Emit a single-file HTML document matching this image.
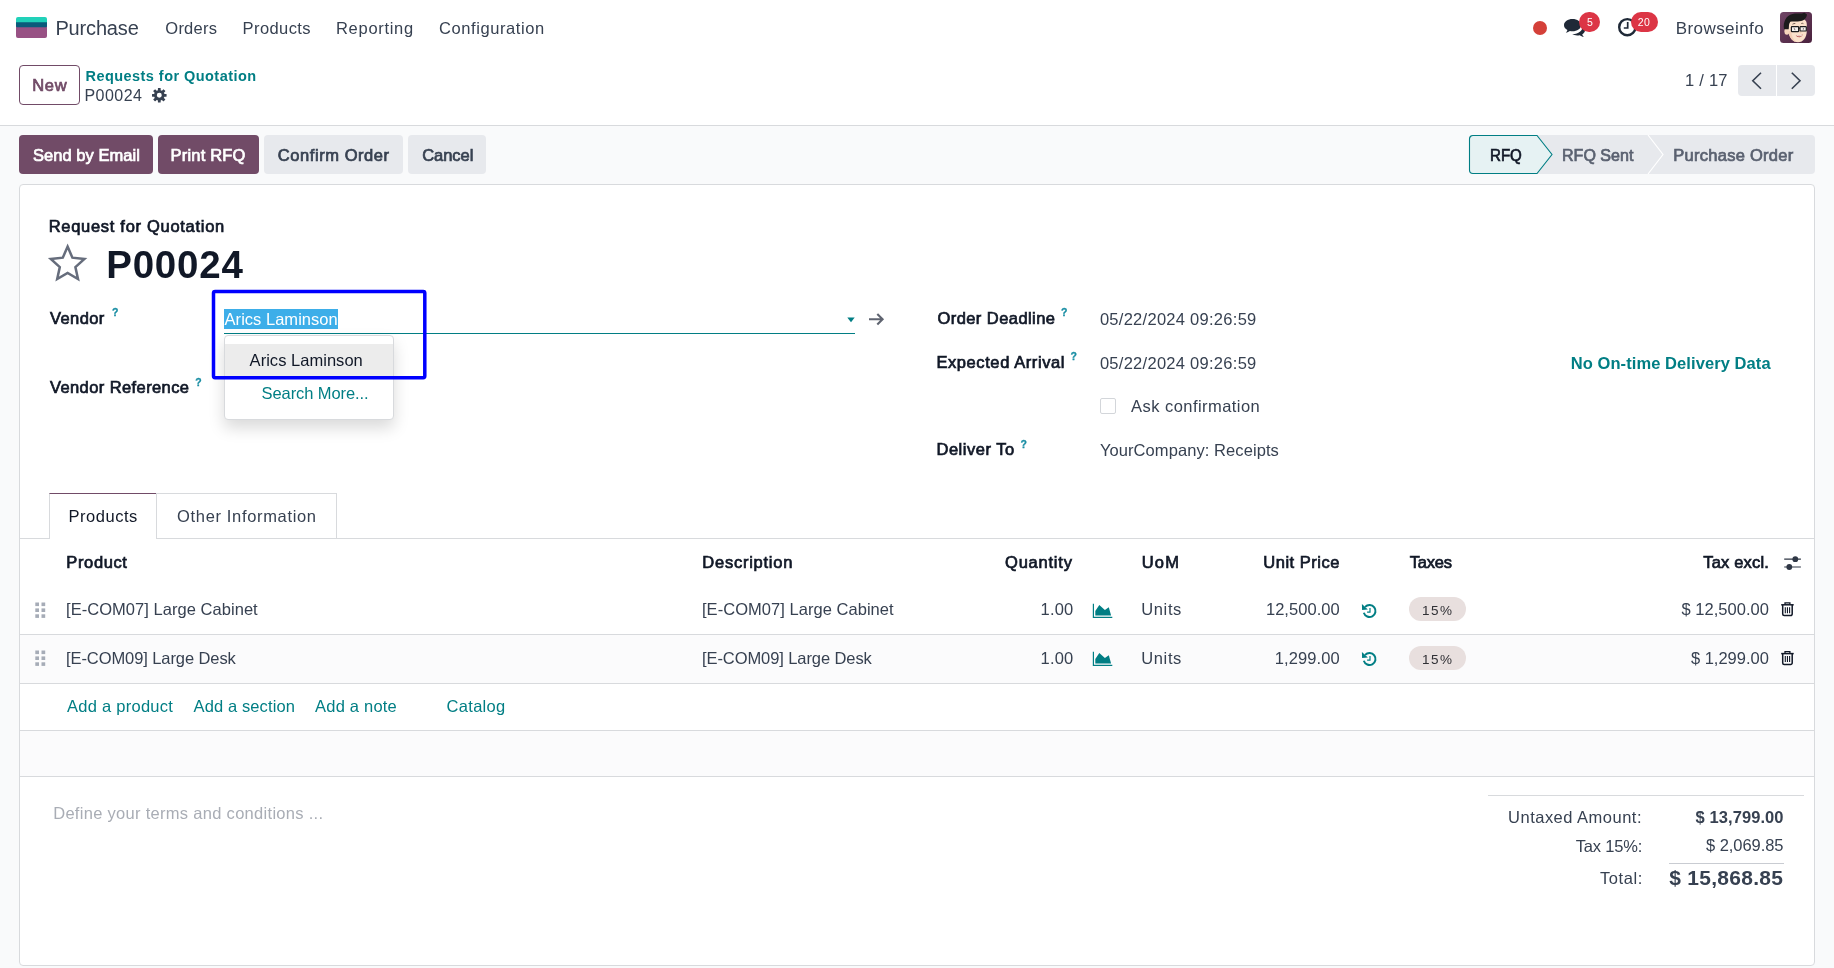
<!DOCTYPE html>
<html lang="en"><head><meta charset="utf-8"><title>Odoo - P00024</title>
<style>
html,body{margin:0;padding:0}
body{width:1834px;height:968px;overflow:hidden;background:#f9fafb;font-family:"Liberation Sans",sans-serif;color:#374151}
#app{will-change:transform;position:relative;width:1834px;height:968px;overflow:hidden}
.t{position:absolute;line-height:1;white-space:nowrap;margin:0;padding:0}
.a{position:absolute;box-sizing:border-box}
svg{position:absolute;overflow:visible}

</style></head>
<body>
<div id="app">
<!-- top header (navbar + control panel) -->
<div class="a" style="left:0;top:0;width:1834px;height:126px;background:#fff;border-bottom:1px solid #d8dadd"></div>
<!-- app logo -->
<svg style="left:16px;top:17px" width="31" height="21" viewBox="0 0 31 21"><path d="M0 8h31v11a2 2 0 0 1-2 2H2a2 2 0 0 1-2-2z" fill="#985184"/><path d="M2 0h27a2 2 0 0 1 2 2v4H0V2a2 2 0 0 1 2-2z" fill="#21d1b9"/><path d="M0 5.200h31v3.800a1.200 1.200 0 0 1-1.200 1.200H1.200A1.200 1.200 0 0 1 0 9z" fill="#0b5a7a"/></svg>
<!-- systray -->
<div class="a" style="left:1532.6px;top:20.7px;width:14.6px;height:14.6px;border-radius:50%;background:#d44039"></div>
<svg style="left:1563px;top:18px" width="24" height="20" viewBox="0 0 24 20"><path d="M9.5 1.1c4.7 0 8.5 2.7 8.5 6.1s-3.800 6.100-8.500 6.100c-.9 0-1.800-.1-2.600-.3-1.100.8-2.500 1.500-4.100 1.700.7-.7 1.400-1.600 1.600-2.700C2.300 10.900 1 9.200 1 7.200 1 3.800 4.800 1.100 9.500 1.100z" fill="#1f2937"/><path d="M19.600 8.300c1.500 1 2.400 2.400 2.400 3.900 0 1.700-1.100 3.200-2.800 4.200.3 1 .9 1.800 1.600 2.500-1.600-.2-3-.9-4.100-1.700-.8.2-1.600.3-2.500.3-1.900 0-3.600-.5-5-1.400 5.700.3 10.700-3.100 10.400-7.800z" fill="#1f2937"/></svg>
<div class="a" style="left:1579px;top:12px;width:21px;height:20px;border-radius:10px;background:#dc3545"></div>
<svg style="left:1617px;top:17px" width="21" height="21" viewBox="0 0 21 21"><circle cx="10.300" cy="10.200" r="8.100" fill="none" stroke="#1f2937" stroke-width="2.400"/><path d="M10.700 5v6H6.800" fill="none" stroke="#1f2937" stroke-width="1.700"/></svg>
<div class="a" style="left:1630.600px;top:12px;width:27.500px;height:20px;border-radius:10px;background:#dc3545"></div>
<!-- avatar -->
<svg style="left:1780px;top:12px" width="32" height="31" viewBox="0 0 32 31"><defs><linearGradient id="avg" x1="0" y1="0" x2="1" y2="1"><stop offset="0" stop-color="#6f4465"/><stop offset="1" stop-color="#4a213d"/></linearGradient><clipPath id="avc"><rect width="32" height="31" rx="3.500"/></clipPath></defs><g clip-path="url(#avc)"><rect width="32" height="31" fill="url(#avg)"/>
<ellipse cx="6.900" cy="19.200" rx="2.500" ry="3.600" fill="#f7d6bd"/>
<path d="M8.600 10c0-3 3-4 9-4s9.200 2 9.200 6.500v6.500c0 6-3.500 11.300-8.800 11.300S8.600 25 8.600 19z" fill="#fbe1cb"/>
<path d="M8.600 19c.2 5 3 10 7.400 11-3-2.500-4.500-6.500-4.700-11z" fill="#f5cfb6"/>
<path d="M4 17.300C2.800 10 6 3.500 12.500 2c4.500-1 8.500.3 11.500-1.200.3-.2.700-.2.800.1.800.3 1.700 1 2.200 1.500-.3 2.600-1.800 5-4.200 6-4.500 1.800-9 .5-12.500 1.300-1.400 1.500-1.500 4.800-1.600 7.500z" fill="#1c1b1c"/>
<path d="M12.500 12.200c.9-.6 1.900-.8 2.800-.7M21.300 11.500c.7-.3 1.500-.3 2.100.1" fill="none" stroke="#3a2a26" stroke-width=".7"/>
<rect x="11.400" y="14.600" width="7.200" height="5" rx=".6" fill="#f4f1ee" stroke="#1d1d1f" stroke-width="1.200"/>
<rect x="20" y="14.700" width="6.300" height="4.300" rx=".6" fill="#f4f1ee" stroke="#1d1d1f" stroke-width="1.200"/>
<path d="M18.600 16.200h1.500" stroke="#1d1d1f" stroke-width="1.100"/>
<path d="M14.200 16.200l.8 2M22.800 16.300l1 .6-1 .6" fill="none" stroke="#4a3a36" stroke-width=".7"/>
<path d="M15.800 22.900c2.200.9 4.800.6 6.900-.7-.6 2.300-2 3.100-3.600 3-1.500-.1-2.700-.9-3.300-2.300z" fill="#b4524e"/>
<path d="M16.200 23c2 .7 4.300.5 6.100-.5-.3.800-.6 1.200-1 1.500-1.400.4-3 .3-4.400-.3z" fill="#f6f2ef"/>
<path d="M19.500 20.300c.5.500 1.200.6 1.800.3" fill="none" stroke="#e8b49c" stroke-width=".7"/>
</g></svg>
<!-- New button -->
<div class="a" style="left:19px;top:65px;width:61px;height:40px;border:1px solid #714B67;border-radius:4px;background:#fff"></div>
<!-- gear -->
<svg style="left:152px;top:87.800px" width="14.600" height="14.600" viewBox="-10 -10 20 20"><g fill="#374151"><path fill-rule="evenodd" d="M0-7.300a7.300 7.300 0 1 0 0 14.600 7.300 7.300 0 0 0 0-14.600zm0 3.900a3.400 3.400 0 1 1 0 6.800 3.400 3.400 0 0 1 0-6.800z"/><g id="gt"><rect x="-1.900" y="-10" width="3.800" height="4" rx=".5"/><rect x="-1.900" y="6" width="3.800" height="4" rx=".5"/></g><use href="#gt" transform="rotate(45)"/><use href="#gt" transform="rotate(90)"/><use href="#gt" transform="rotate(135)"/></g></svg>
<!-- pager -->
<div class="a" style="left:1738px;top:65px;width:38px;height:31px;border-radius:4px 0 0 4px;background:#e7e9ed"></div>
<div class="a" style="left:1777px;top:65px;width:38px;height:31px;border-radius:0 4px 4px 0;background:#e7e9ed"></div>
<svg style="left:1738px;top:65px" width="77" height="31" viewBox="0 0 77 31"><path d="M23 7.700l-8.200 8 8.200 8" fill="none" stroke="#374151" stroke-width="1.600"/><path d="M53.800 7.700l8.200 8-8.200 8" fill="none" stroke="#374151" stroke-width="1.600"/></svg>
<!-- action buttons -->
<div class="a" style="left:19px;top:135px;width:134px;height:39px;border-radius:4px;background:#714B67"></div>
<div class="a" style="left:158px;top:135px;width:101px;height:39px;border-radius:4px;background:#714B67"></div>
<div class="a" style="left:264px;top:135px;width:139px;height:39px;border-radius:4px;background:#e7e9ed"></div>
<div class="a" style="left:408px;top:135px;width:78px;height:39px;border-radius:4px;background:#e7e9ed"></div>
<!-- statusbar -->
<div class="a" style="left:1469px;top:135px;width:346px;height:39px;border-radius:4px;background:#e7e9ed"></div>
<svg style="left:1469px;top:135px" width="346" height="39" viewBox="0 0 346 39"><path d="M4 .5h64l15 19-15 19H4a3.500 3.500 0 0 1-3.500-3.500V4A3.500 3.500 0 0 1 4 .5z" fill="#e6f2f3" stroke="#017e84" stroke-width="1.100"/><path d="M179 0l15 19.500-15 19.500" fill="none" stroke="#fff" stroke-width="1.200"/></svg>
<!-- sheet -->
<div class="a" style="left:19px;top:184px;width:1796px;height:782px;border:1px solid #d8dadd;border-radius:4px;background:#fff"></div>
<!-- star -->
<svg style="left:47px;top:242px" width="42" height="40" viewBox="0 0 42 40"><path d="M20.600 4.600l4.800 11.100 12 1.300-9 8.100 2.600 11.900-10.400-6.100-10.400 6.100 2.600-11.900-9-8.100 12-1.300z" fill="none" stroke="#666d7c" stroke-width="2.500" stroke-linejoin="miter"/></svg>
<!-- vendor field -->
<div class="a" style="left:224px;top:309px;width:114px;height:20px;background:#3daee9"></div>
<div class="a" style="left:224px;top:333px;width:631px;height:1px;background:#017e84"></div>
<svg style="left:847px;top:317px" width="8" height="6" viewBox="0 0 8 6"><path d="M.3.600h7.400L4 5.200z" fill="#017e84"/></svg>
<svg style="left:868px;top:312px" width="17" height="15" viewBox="0 0 17 15"><path d="M1 7.300h13M9.300 2l5.300 5.300-5.300 5.300" fill="none" stroke="#5f6470" stroke-width="2.100"/></svg>
<!-- dropdown -->
<div class="a" style="left:224px;top:334.500px;width:170px;height:85px;border:1px solid #d8dadd;border-radius:4px;background:#fff;box-shadow:0 8px 16px rgba(0,0,0,.15)"></div>
<div class="a" style="left:225px;top:344px;width:168px;height:31.500px;background:#ececec"></div>
<!-- blue highlight rect -->
<svg style="left:0;top:0" width="440" height="390" viewBox="0 0 440 390"><rect x="213.500" y="291.400" width="211.300" height="86.300" rx="1.600" fill="none" stroke="#0000ff" stroke-width="3.500"/></svg>
<!-- checkbox -->
<div class="a" style="left:1100px;top:398px;width:16px;height:16px;border:1px solid #d3d6da;border-radius:2px;background:#fff"></div>
<!-- tabs -->
<div class="a" style="left:20px;top:538px;width:1794px;height:1px;background:#d8dadd"></div>
<div class="a" style="left:49px;top:493px;width:108px;height:46px;border:1px solid #d8dadd;border-top-color:#714B67;border-bottom:none;background:#fff"></div>
<div class="a" style="left:156px;top:493px;width:181px;height:45px;border:1px solid #d8dadd;border-bottom:none;background:#fff"></div>
<!-- table -->
<div class="a" style="left:20px;top:634px;width:1794px;height:1px;background:#d8dadd"></div>
<div class="a" style="left:20px;top:635px;width:1794px;height:48px;background:#fbfbfc"></div>
<div class="a" style="left:20px;top:683px;width:1794px;height:1px;background:#d8dadd"></div>
<div class="a" style="left:20px;top:730px;width:1794px;height:1px;background:#d8dadd"></div>
<div class="a" style="left:20px;top:731px;width:1794px;height:45px;background:#fbfbfc"></div>
<div class="a" style="left:20px;top:776px;width:1794px;height:1px;background:#d8dadd"></div>
<!-- row icons -->
<svg style="left:0;top:0" width="1834" height="968" viewBox="0 0 1834 968">
<defs>
<g id="drag" fill="#a6acb7"><rect x="35.300" y="0" width="3.700" height="3.600"/><rect x="41.500" y="0" width="3.700" height="3.600"/><rect x="35.300" y="5.900" width="3.700" height="3.600"/><rect x="41.500" y="5.900" width="3.700" height="3.600"/><rect x="35.300" y="11.800" width="3.700" height="3.600"/><rect x="41.500" y="11.800" width="3.700" height="3.600"/></g>
<g id="chart" fill="#017e84"><path d="M1092.800 0h1.200v13h18.300v1.200h-19.500z"/><path d="M1095.300 11.800V7.100l4-6 5.600 5.100 3.900-2.800 2.300 8.400z"/></g>
<g id="hist"><path d="M1365.100 3.100a6 6 0 1 1-1.300 5.900" fill="none" stroke="#017e84" stroke-width="2"/><path d="M1361.900 .300l.200 6 5.800-.600z" fill="#017e84"/><path d="M1370 4.300v4.100h-2.900" fill="none" stroke="#017e84" stroke-width="1.200"/></g>
<g id="trash" fill="none" stroke="#111827"><path d="M1781.200 3.300h12.500" stroke-width="1.500"/><path d="M1785 3V1.300h4.900V3" stroke-width="1.300"/><path d="M1782.700 3.600v9a1.500 1.500 0 0 0 1.500 1.500h6.500a1.500 1.500 0 0 0 1.500-1.500v-9" stroke-width="1.500"/><path d="M1785.300 5.800v6M1787.450 5.800v6M1789.600 5.800v6" stroke-width="1.100"/></g>
</defs>
<use href="#drag" y="602.500"/><use href="#drag" y="650.500"/>
<use href="#chart" y="603.800"/><use href="#chart" y="651.800"/>
<use href="#hist" y="603.800"/><use href="#hist" y="651.800"/>
<use href="#trash" y="601.500"/><use href="#trash" y="650.300"/>
<!-- sliders -->
<g stroke="#2f3745" stroke-width="1.200" fill="#2f3745"><path d="M1784.200 559.200h16.700M1784.200 567h16.700"/><circle cx="1795.300" cy="559.200" r="2.900" stroke="none"/><circle cx="1789.300" cy="567" r="2.900" stroke="none"/></g>
</svg>
<!-- tax badges -->
<div class="a" style="left:1409px;top:597px;width:57px;height:24px;border-radius:12px;background:#e8dfde"></div>
<div class="a" style="left:1409px;top:646px;width:57px;height:24px;border-radius:12px;background:#e8dfde"></div>
<!-- totals lines -->
<div class="a" style="left:1488px;top:795px;width:316px;height:1px;background:#d8dadd"></div>
<div class="a" style="left:1669px;top:863px;width:115px;height:1px;background:#c9ccd2"></div>

<span class="t" style="left:55.40px;top:17.70px;font-size:20px;color:#374151;font-weight:400;letter-spacing:-0.153px;">Purchase</span>
<span class="t" style="left:165.30px;top:19.70px;font-size:16.5px;color:#374151;font-weight:400;letter-spacing:0.245px;">Orders</span>
<span class="t" style="left:242.60px;top:19.70px;font-size:16.5px;color:#374151;font-weight:400;letter-spacing:0.405px;">Products</span>
<span class="t" style="left:336.00px;top:19.70px;font-size:16.5px;color:#374151;font-weight:400;letter-spacing:0.704px;">Reporting</span>
<span class="t" style="left:439.00px;top:19.70px;font-size:16.5px;color:#374151;font-weight:400;letter-spacing:0.586px;">Configuration</span>
<span class="t" style="left:1675.70px;top:20.00px;font-size:17px;color:#374151;font-weight:400;letter-spacing:0.429px;">Browseinfo</span>
<span class="t" style="left:1587.10px;top:16.90px;font-size:10.5px;color:#ffffff;font-weight:400;">5</span>
<span class="t" style="left:1637.80px;top:16.90px;font-size:10.5px;color:#ffffff;font-weight:400;letter-spacing:0.360px;">20</span>
<span class="t" style="left:32.35px;top:76.80px;font-size:16.5px;color:#714B67;font-weight:400;-webkit-text-stroke:0.7px;letter-spacing:0.604px;">New</span>
<span class="t" style="left:85.50px;top:69.00px;font-size:14.5px;color:#017e84;font-weight:700;letter-spacing:0.450px;">Requests for Quotation</span>
<span class="t" style="left:84.50px;top:87.90px;font-size:16px;color:#374151;font-weight:400;letter-spacing:0.447px;">P00024</span>
<span class="t" style="left:1685.00px;top:72.30px;font-size:16.5px;color:#374151;font-weight:400;letter-spacing:0.239px;">1 / 17</span>
<span class="t" style="left:33.05px;top:146.90px;font-size:16.5px;color:#ffffff;font-weight:400;-webkit-text-stroke:0.7px;letter-spacing:0.040px;">Send by Email</span>
<span class="t" style="left:170.55px;top:146.90px;font-size:16.5px;color:#ffffff;font-weight:400;-webkit-text-stroke:0.7px;letter-spacing:0.187px;">Print RFQ</span>
<span class="t" style="left:277.85px;top:146.90px;font-size:16.5px;color:#374151;font-weight:400;-webkit-text-stroke:0.7px;letter-spacing:0.556px;">Confirm Order</span>
<span class="t" style="left:422.15px;top:146.90px;font-size:16.5px;color:#374151;font-weight:400;-webkit-text-stroke:0.7px;letter-spacing:-0.039px;">Cancel</span>
<span class="t" style="left:1489.81px;top:146.90px;font-size:16.5px;color:#111827;font-weight:400;-webkit-text-stroke:0.7px;transform:scaleX(0.9137);transform-origin:0 0;">RFQ</span>
<span class="t" style="left:1561.67px;top:146.90px;font-size:16.5px;color:#5a6170;font-weight:400;-webkit-text-stroke:0.7px;transform:scaleX(0.9732);transform-origin:0 0;">RFQ Sent</span>
<span class="t" style="left:1673.35px;top:146.90px;font-size:16.5px;color:#5a6170;font-weight:400;-webkit-text-stroke:0.7px;letter-spacing:0.256px;">Purchase Order</span>
<span class="t" style="left:48.65px;top:217.80px;font-size:16.5px;color:#111827;font-weight:400;-webkit-text-stroke:0.7px;letter-spacing:0.707px;">Request for Quotation</span>
<span class="t" style="left:106.20px;top:245.60px;font-size:38.5px;color:#111827;font-weight:700;letter-spacing:0.795px;">P00024</span>
<span class="t" style="left:49.95px;top:310.30px;font-size:16.5px;color:#111827;font-weight:400;-webkit-text-stroke:0.7px;letter-spacing:0.420px;">Vendor</span>
<span class="t" style="left:111.95px;top:307.40px;font-size:10.5px;color:#1a8ea4;font-weight:700;-webkit-text-stroke:0.3px;">?</span>
<span class="t" style="left:49.95px;top:379.00px;font-size:16.5px;color:#111827;font-weight:400;-webkit-text-stroke:0.7px;letter-spacing:0.405px;">Vendor Reference</span>
<span class="t" style="left:195.25px;top:377.00px;font-size:10.5px;color:#1a8ea4;font-weight:700;-webkit-text-stroke:0.3px;">?</span>
<span class="t" style="left:224.60px;top:311.00px;font-size:16.5px;color:#ffffff;font-weight:400;letter-spacing:0.022px;">Arics Laminson</span>
<span class="t" style="left:249.60px;top:352.10px;font-size:16.5px;color:#111827;font-weight:400;letter-spacing:0.030px;">Arics Laminson</span>
<span class="t" style="left:261.60px;top:384.80px;font-size:16.5px;color:#017e84;font-weight:400;letter-spacing:-0.094px;">Search More...</span>
<span class="t" style="left:937.45px;top:310.00px;font-size:16.5px;color:#111827;font-weight:400;-webkit-text-stroke:0.7px;letter-spacing:0.437px;">Order Deadline</span>
<span class="t" style="left:1060.95px;top:306.70px;font-size:10.5px;color:#1a8ea4;font-weight:700;-webkit-text-stroke:0.3px;">?</span>
<span class="t" style="left:936.45px;top:353.70px;font-size:16.5px;color:#111827;font-weight:400;-webkit-text-stroke:0.7px;letter-spacing:0.582px;">Expected Arrival</span>
<span class="t" style="left:1070.55px;top:350.80px;font-size:10.5px;color:#1a8ea4;font-weight:700;-webkit-text-stroke:0.3px;">?</span>
<span class="t" style="left:936.45px;top:440.60px;font-size:16.5px;color:#111827;font-weight:400;-webkit-text-stroke:0.7px;letter-spacing:0.525px;">Deliver To</span>
<span class="t" style="left:1020.55px;top:438.70px;font-size:10.5px;color:#1a8ea4;font-weight:700;-webkit-text-stroke:0.3px;">?</span>
<span class="t" style="left:1099.90px;top:311.00px;font-size:16.5px;color:#374151;font-weight:400;letter-spacing:0.277px;">05/22/2024 09:26:59</span>
<span class="t" style="left:1099.90px;top:355.00px;font-size:16.5px;color:#374151;font-weight:400;letter-spacing:0.277px;">05/22/2024 09:26:59</span>
<span class="t" style="left:1131.10px;top:397.80px;font-size:16.5px;color:#374151;font-weight:400;letter-spacing:0.448px;">Ask confirmation</span>
<span class="t" style="left:1099.90px;top:441.50px;font-size:16.5px;color:#374151;font-weight:400;letter-spacing:0.082px;">YourCompany: Receipts</span>
<span class="t" style="left:1570.70px;top:355.00px;font-size:16.5px;color:#017e84;font-weight:700;letter-spacing:0.079px;">No On-time Delivery Data</span>
<span class="t" style="left:68.50px;top:507.70px;font-size:16.5px;color:#111827;font-weight:400;letter-spacing:0.534px;">Products</span>
<span class="t" style="left:177.10px;top:507.70px;font-size:16.5px;color:#374151;font-weight:400;letter-spacing:0.655px;">Other Information</span>
<span class="t" style="left:66.35px;top:553.80px;font-size:16.5px;color:#111827;font-weight:400;-webkit-text-stroke:0.7px;letter-spacing:0.620px;">Product</span>
<span class="t" style="left:702.35px;top:553.80px;font-size:16.5px;color:#111827;font-weight:400;-webkit-text-stroke:0.7px;letter-spacing:0.744px;">Description</span>
<span class="t" style="left:1005.05px;top:553.80px;font-size:16.5px;color:#111827;font-weight:400;-webkit-text-stroke:0.7px;letter-spacing:0.772px;">Quantity</span>
<span class="t" style="left:1141.65px;top:553.80px;font-size:16.5px;color:#111827;font-weight:400;-webkit-text-stroke:0.7px;letter-spacing:1.254px;">UoM</span>
<span class="t" style="left:1263.25px;top:553.80px;font-size:16.5px;color:#111827;font-weight:400;-webkit-text-stroke:0.7px;letter-spacing:0.518px;">Unit Price</span>
<span class="t" style="left:1409.75px;top:553.80px;font-size:16.5px;color:#111827;font-weight:400;-webkit-text-stroke:0.7px;letter-spacing:-0.188px;">Taxes</span>
<span class="t" style="left:1703.25px;top:553.80px;font-size:16.5px;color:#111827;font-weight:400;-webkit-text-stroke:0.7px;letter-spacing:0.187px;">Tax excl.</span>
<span class="t" style="left:66.00px;top:600.90px;font-size:16.5px;color:#374151;font-weight:400;letter-spacing:0.042px;">[E-COM07] Large Cabinet</span>
<span class="t" style="left:702.00px;top:600.90px;font-size:16.5px;color:#374151;font-weight:400;letter-spacing:0.038px;">[E-COM07] Large Cabinet</span>
<span class="t" style="left:1040.60px;top:600.90px;font-size:16.5px;color:#374151;font-weight:400;letter-spacing:0.154px;">1.00</span>
<span class="t" style="left:1141.30px;top:600.90px;font-size:16.5px;color:#374151;font-weight:400;letter-spacing:0.614px;">Units</span>
<span class="t" style="left:1265.90px;top:600.90px;font-size:16.5px;color:#374151;font-weight:400;letter-spacing:0.059px;">12,500.00</span>
<span class="t" style="left:1422.00px;top:603.60px;font-size:13.5px;color:#303035;font-weight:400;letter-spacing:1.492px;">15%</span>
<span class="t" style="left:1681.50px;top:600.90px;font-size:16.5px;color:#374151;font-weight:400;letter-spacing:0.021px;">$ 12,500.00</span>
<span class="t" style="left:66.00px;top:650.00px;font-size:16.5px;color:#374151;font-weight:400;letter-spacing:-0.086px;">[E-COM09] Large Desk</span>
<span class="t" style="left:702.00px;top:650.00px;font-size:16.5px;color:#374151;font-weight:400;letter-spacing:-0.086px;">[E-COM09] Large Desk</span>
<span class="t" style="left:1040.60px;top:650.00px;font-size:16.5px;color:#374151;font-weight:400;letter-spacing:0.154px;">1.00</span>
<span class="t" style="left:1141.30px;top:650.00px;font-size:16.5px;color:#374151;font-weight:400;letter-spacing:0.614px;">Units</span>
<span class="t" style="left:1274.80px;top:650.00px;font-size:16.5px;color:#374151;font-weight:400;letter-spacing:0.107px;">1,299.00</span>
<span class="t" style="left:1422.00px;top:652.70px;font-size:13.5px;color:#303035;font-weight:400;letter-spacing:1.492px;">15%</span>
<span class="t" style="left:1690.90px;top:650.00px;font-size:16.5px;color:#374151;font-weight:400;">$ 1,299.00</span>
<span class="t" style="left:67.00px;top:698.30px;font-size:16.5px;color:#017e84;font-weight:400;letter-spacing:0.262px;">Add a product</span>
<span class="t" style="left:193.50px;top:698.30px;font-size:16.5px;color:#017e84;font-weight:400;letter-spacing:0.124px;">Add a section</span>
<span class="t" style="left:315.10px;top:698.30px;font-size:16.5px;color:#017e84;font-weight:400;letter-spacing:0.207px;">Add a note</span>
<span class="t" style="left:446.50px;top:698.30px;font-size:16.5px;color:#017e84;font-weight:400;letter-spacing:0.317px;">Catalog</span>
<span class="t" style="left:53.20px;top:804.80px;font-size:16.5px;color:#a9adb5;font-weight:400;letter-spacing:0.295px;">Define your terms and conditions ...</span>
<span class="t" style="left:1508.10px;top:809.00px;font-size:16.5px;color:#374151;font-weight:400;letter-spacing:0.485px;">Untaxed Amount:</span>
<span class="t" style="left:1695.60px;top:808.50px;font-size:16.5px;color:#374151;font-weight:700;letter-spacing:0.071px;">$ 13,799.00</span>
<span class="t" style="left:1575.70px;top:838.00px;font-size:16.5px;color:#374151;font-weight:400;letter-spacing:-0.169px;">Tax 15%:</span>
<span class="t" style="left:1706.10px;top:837.20px;font-size:16.5px;color:#374151;font-weight:400;letter-spacing:-0.068px;">$ 2,069.85</span>
<span class="t" style="left:1600.00px;top:870.00px;font-size:16.5px;color:#374151;font-weight:400;letter-spacing:0.589px;">Total:</span>
<span class="t" style="left:1669.20px;top:866.50px;font-size:21px;color:#374151;font-weight:700;letter-spacing:0.284px;">$ 15,868.85</span>
</div>
</body></html>
